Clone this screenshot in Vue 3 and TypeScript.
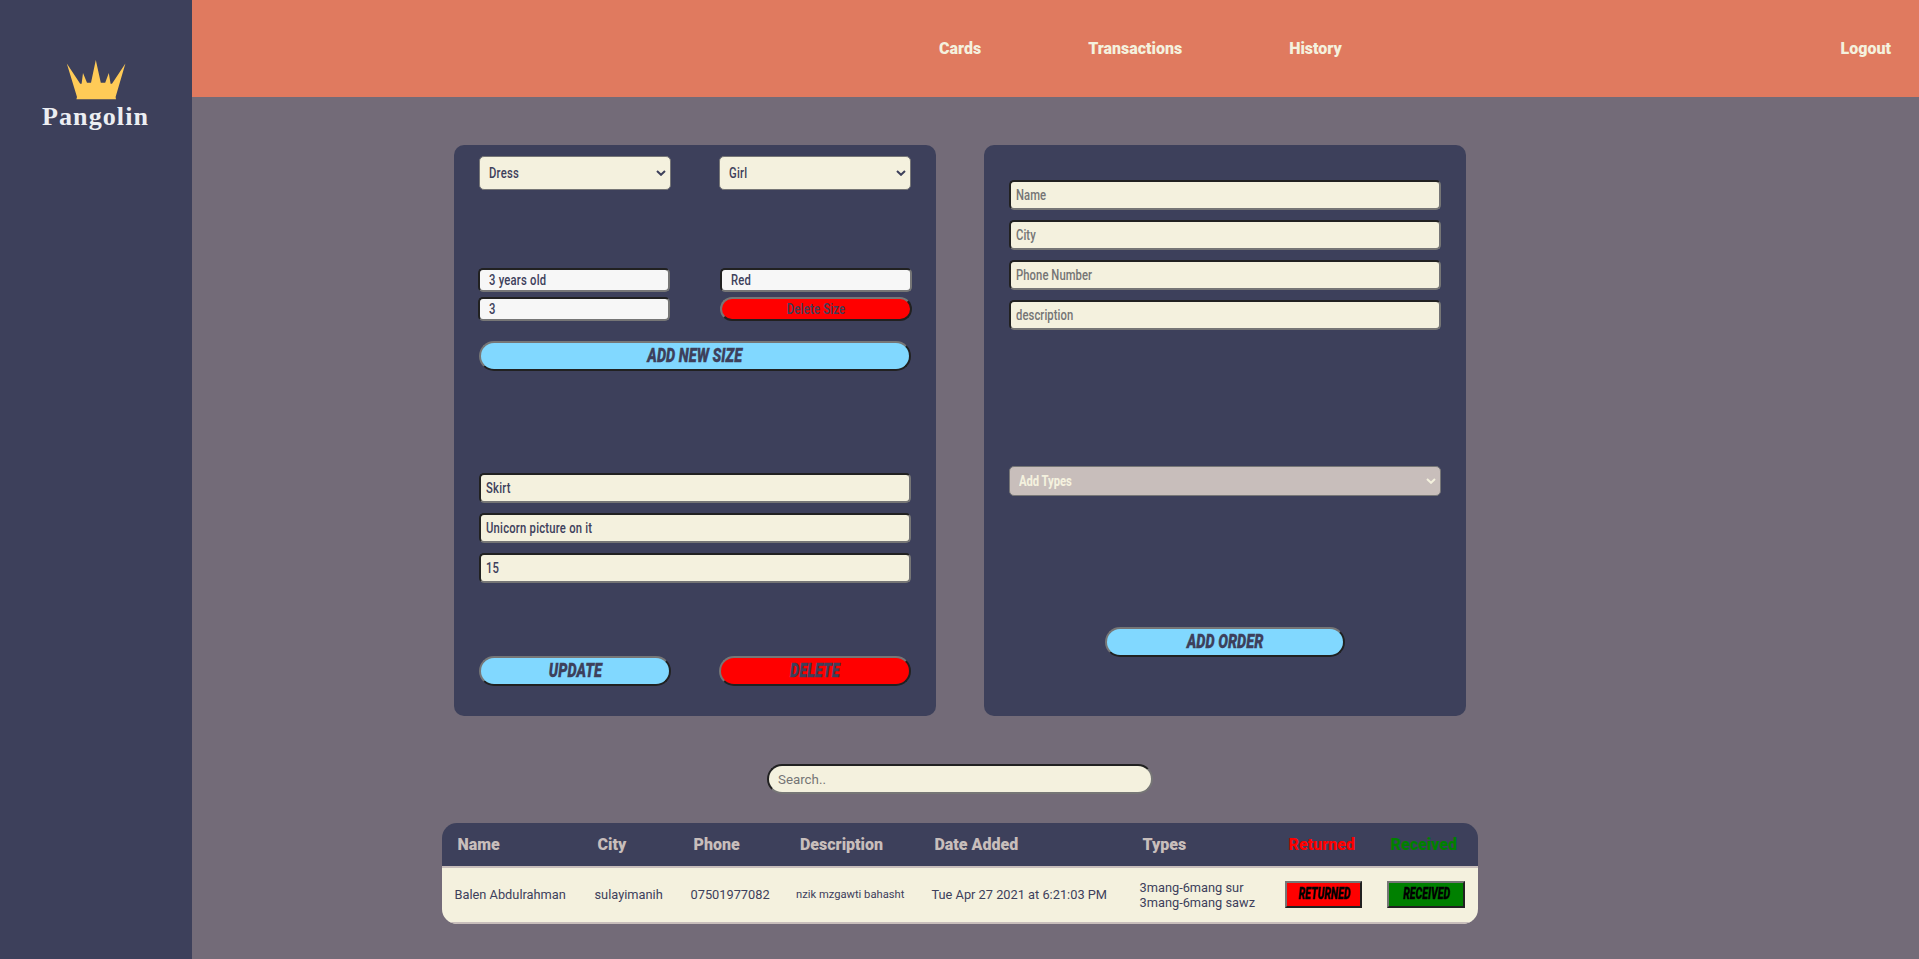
<script setup lang="ts">
interface Order {
  name: string
  city: string
  phone: string
  description: string
  added: string
  types: string[]
}

const links: string[] = ['Cards', 'Transactions', 'History']
const columns: string[] = ['Name', 'City', 'Phone', 'Description', 'Date Added', 'Types']
const details: string[] = ['Skirt', 'Unicorn picture on it', '15']
const customerFields: string[] = ['Name', 'City', 'Phone Number', 'description']
const orders: Order[] = [
  {
    name: 'Balen Abdulrahman',
    city: 'sulayimanih',
    phone: '07501977082',
    description: 'nzik mzgawti bahasht',
    added: 'Tue Apr 27 2021 at 6:21:03 PM',
    types: ['3mang-6mang sur', '3mang-6mang sawz'],
  },
]
</script>

<template>
  <div class="page">
    <aside class="sidebar">
      <svg class="logo" viewBox="0 0 108 74" width="108" height="74">
        <path
          class="crown"
          d="M24.8 3.5 38.2 23.8 39.6 23.8 41 13 45 22.8 49 22.8 53.8 0 58.8 22.8 63.2 22.8 66.8 13 68.6 23.8 70 23.8 83.4 3.5 73.6 37 74 39.3 34.4 39.3 35 37Z"
        />
        <text class="brand" x="0" y="64.8" textLength="107" lengthAdjust="spacingAndGlyphs">Pangolin</text>
      </svg>
    </aside>

    <div class="content">
      <header class="topbar">
        <nav class="links">
          <a v-for="link in links" :key="link">{{ link }}</a>
        </nav>
        <a class="logout">Logout</a>
      </header>

      <main class="main">
        <div class="cards">
          <section class="card product">
            <div class="pair">
              <div class="select">
                <span class="narrow">Dress</span>
                <svg class="chevron" viewBox="0 0 10 6" width="10" height="6"><path d="M1 1 5 4.8 9 1" /></svg>
              </div>
              <div class="select">
                <span class="narrow">Girl</span>
                <svg class="chevron" viewBox="0 0 10 6" width="10" height="6"><path d="M1 1 5 4.8 9 1" /></svg>
              </div>
            </div>
            <div class="sizes">
              <div class="field small"><input class="narrow" value="3 years old" /></div>
              <div class="field small"><input class="narrow" value="Red" /></div>
              <div class="field small"><input class="narrow" value="3" /></div>
              <button class="pill red remove"><span class="narrow">Delete Size</span></button>
            </div>
            <button class="pill blue add-size"><span class="comic">Add new size</span></button>
            <div class="stack details">
              <div v-for="value in details" :key="value" class="field">
                <input class="narrow" :value="value" />
              </div>
            </div>
            <div class="pair actions">
              <button class="pill blue"><span class="comic">Update</span></button>
              <button class="pill red"><span class="comic">Delete</span></button>
            </div>
          </section>

          <section class="card order">
            <div class="stack">
              <div v-for="label in customerFields" :key="label" class="field">
                <input class="narrow" :placeholder="label" />
              </div>
            </div>
            <div class="select types">
              <span class="narrow">Add Types</span>
              <svg class="chevron" viewBox="0 0 10 6" width="10" height="6"><path d="M1 1 5 4.8 9 1" /></svg>
            </div>
            <button class="pill blue add-order"><span class="comic">Add order</span></button>
          </section>
        </div>

        <input class="search" placeholder="Search.." />

        <div class="table">
          <div class="row head">
            <span v-for="column in columns" :key="column">{{ column }}</span>
            <span class="returned">Returned</span>
            <span class="received">Received</span>
          </div>
          <div v-for="order in orders" :key="order.phone" class="row">
            <span>{{ order.name }}</span>
            <span>{{ order.city }}</span>
            <span>{{ order.phone }}</span>
            <span class="note">{{ order.description }}</span>
            <span>{{ order.added }}</span>
            <span><span v-for="type in order.types" :key="type" class="type">{{ type }}</span></span>
            <span><button class="mark red"><span class="comic">Returned</span></button></span>
            <span><button class="mark green wide"><span class="comic">Received</span></button></span>
          </div>
        </div>
      </main>
    </div>
  </div>
</template>

<style>
body {
  background: #736b78;
  overflow: hidden;
}
</style>

<style scoped>
* {
  box-sizing: border-box;
}
.page {
  display: flex;
  height: 959px;
  font-family: Roboto, sans-serif;
  color: #3d405b;
  background: #736b78;
}
.sidebar {
  width: 192px;
  flex: none;
  background: #3d405b;
  display: flex;
  justify-content: center;
  align-items: flex-start;
  padding: 60px 1px 0 0;
}
.logo {
  overflow: visible;
}
.crown {
  fill: #ffcb57;
}
.brand {
  font: bold 25px 'Liberation Serif', serif;
  letter-spacing: 1px;
  fill: #eceef2;
}
.content {
  flex: 1;
}
.topbar {
  height: 97px;
  background: #e07a5f;
  color: #f4f1de;
  font-size: 16px;
  font-weight: 900;
  letter-spacing: 0;
  display: flex;
  align-items: center;
  justify-content: space-between;
  padding: 0 28px 0 747px;
}
.links {
  display: flex;
  gap: 107px;
}
.main {
  display: flex;
  flex-direction: column;
  align-items: center;
  padding-top: 48px;
  padding-right: 191px;
}
.cards {
  display: flex;
  gap: 48px;
}
.card {
  width: 482px;
  height: 571px;
  border-radius: 10px;
  background: #3d405b;
  padding: 0 25px;
}
.product {
  padding-top: 11px;
}
.order {
  padding-top: 35px;
}
.pair {
  display: grid;
  grid-template-columns: 1fr 1fr;
  gap: 48px;
}
.select {
  height: 34px;
  border: 1px solid #767676;
  border-radius: 5px;
  background: #f4f1de;
  display: flex;
  align-items: center;
  justify-content: space-between;
  padding: 0 4px 0 9px;
}
.chevron {
  fill: none;
  stroke: currentColor;
  stroke-width: 2;
  flex: none;
}
.narrow {
  font: 500 15px/20px Roboto, sans-serif;
  letter-spacing: 0.3px;
  color: inherit;
  transform: scaleX(0.75);
  transform-origin: left center;
  white-space: nowrap;
}
.field {
  height: 30px;
  border: 2px inset #767676;
  border-radius: 5px;
  background: #f4f1de;
  padding: 0 5px;
  display: flex;
  align-items: center;
}
.stack .narrow::placeholder {
  letter-spacing: 0.1px;
}
.field input {
  border: 0;
  padding: 0;
  outline: 0;
  background: none;
  width: 133%;
  flex: none;
}
.field input::placeholder {
  color: #757575;
}
.sizes {
  display: grid;
  grid-template-columns: 192px 192px;
  gap: 5px 50px;
  margin: 78px -1px 0;
}
.small {
  height: 24px;
  background: #f7f7f7;
  padding-left: 9px;
  overflow: hidden;
}
.pill {
  height: 30px;
  padding: 0;
  border: 2px outset #767676;
  border-radius: 15px;
  color: #3d405b;
  display: flex;
  align-items: center;
  justify-content: center;
}
.remove {
  height: 24px;
}
.pill .narrow {
  transform-origin: center;
}
.blue {
  background: #81d8ff;
}
.red {
  background: #ff0000;
}
.green {
  background: #008000;
}
.comic {
  font: italic 900 20.5px/24px Roboto, sans-serif;
  text-transform: uppercase;
  white-space: nowrap;
  transform: translateY(-1px) scaleX(0.71);
  -webkit-text-stroke: 0.3px currentColor;
}
.add-size {
  width: 100%;
  margin-top: 20px;
}
.stack {
  display: grid;
  gap: 10px;
}
.details {
  margin-top: 102px;
}
.actions {
  margin-top: 73px;
}
.types {
  height: 30px;
  margin-top: 136px;
  background: #c8bebb;
  color: #f4f1de;
}
.types .narrow {
  font-weight: 800;
  letter-spacing: -0.1px;
}
.add-order {
  width: 240px;
  margin: 131px auto 0;
}
.search {
  width: 386px;
  height: 30px;
  margin-top: 48px;
  padding: 0 9px;
  border: 2px inset #767676;
  border-radius: 15px;
  background: #f4f1de;
  font: 13.33px Roboto, sans-serif;
}
.search::placeholder {
  color: #757575;
}
.table {
  width: 1036px;
  margin-top: 29px;
  border-radius: 15px;
  overflow: hidden;
}
.row {
  height: 56px;
  display: grid;
  grid-template-columns: 140px 96px 105.5px 135.5px 208px 145px 102px 104px;
  align-items: center;
  background: #f4f1de;
  border-bottom: 2px solid #c8bebb;
  padding-bottom: 1px;
  font-size: 12.8px;
  white-space: nowrap;
}
.row > span {
  padding-left: 12.5px;
}
.head {
  height: 45px;
  padding-bottom: 0;
  background: #3d405b;
  color: #c8bebb;
  font-size: 16px;
  font-weight: 900;
  letter-spacing: 0;
}
.head > span {
  padding-left: 15.5px;
}
.head > :nth-child(4) {
  padding-left: 16.5px;
}
.head > .returned {
  color: #ff0000;
  padding-left: 16.5px;
}
.head > .received {
  color: #008000;
  padding-left: 16.5px;
}
.row > .note {
  font-size: 11.2px;
}
.type {
  display: block;
  line-height: 15px;
}
.mark {
  width: 77px;
  height: 27px;
  margin-left: 0.5px;
  padding: 0;
  border: 2px outset #767676;
  color: #000;
  display: flex;
  align-items: center;
  justify-content: center;
}
.wide {
  width: 78px;
}
.mark .comic {
  font-size: 16px;
  transform: translate(1px, -1px) scaleX(0.66);
}
</style>
